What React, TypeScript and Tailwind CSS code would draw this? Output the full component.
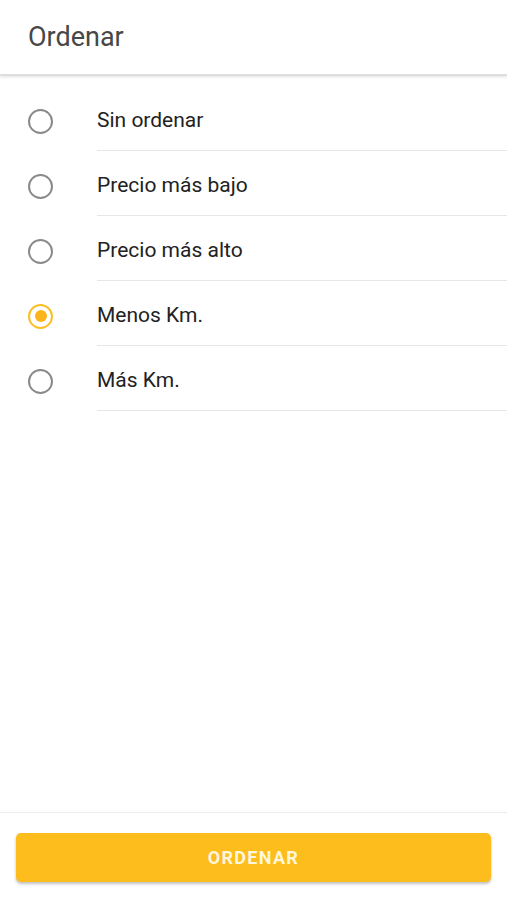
import React, { useState } from 'react';

const OPTIONS = ['Sin ordenar', 'Precio más bajo', 'Precio más alto', 'Menos Km.', 'Más Km.'];

const Radio: React.FC<{ checked: boolean }> = ({ checked }) => (
  <span
    className={`flex items-center justify-center w-[25px] h-[25px] rounded-full border-2 ${
      checked ? 'border-[#fbbf24]' : 'border-[#8a8a8a]'
    }`}
  >
    {checked && <span className="w-[12px] h-[12px] rounded-full bg-[#fbb41c]" />}
  </span>
);

const App: React.FC = () => {
  const [selected, setSelected] = useState(3);

  return (
    <div className="w-[507px] h-[900px] bg-white flex flex-col" style={{ fontFamily: 'Roboto, "Liberation Sans", sans-serif' }}>
      <div className="h-[76px] flex items-center px-[28px] border-b-2 border-[#dedede] shadow-[0_1px_3px_rgba(0,0,0,0.12)]">
        <h1 className="text-[27px] text-[#474747] leading-none">Ordenar</h1>
      </div>

      <div className="flex-1 pt-[10px]">
        {OPTIONS.map((label, i) => (
          <button
            key={label}
            onClick={() => setSelected(i)}
            className="w-full h-[65px] flex items-stretch text-left"
          >
            <div className="w-[97px] flex items-center pl-[28px] pt-[5px]">
              <Radio checked={selected === i} />
            </div>
            <div className="flex-1 flex items-center pt-[5px] border-b border-[#e6e6e6]">
              <span className="text-[21px] text-[#222]">{label}</span>
            </div>
          </button>
        ))}
      </div>

      <div className="border-t border-[#ececec] px-[16px] pt-[20px] pb-[18px]">
        <button className="w-full h-[49px] rounded-[5px] bg-[#fdbd1c] shadow-[0_2px_3px_rgba(0,0,0,0.25)] text-[#fff6dc] font-bold text-[18px] tracking-[1.3px]">
          ORDENAR
        </button>
      </div>
    </div>
  );
};

export default App;
